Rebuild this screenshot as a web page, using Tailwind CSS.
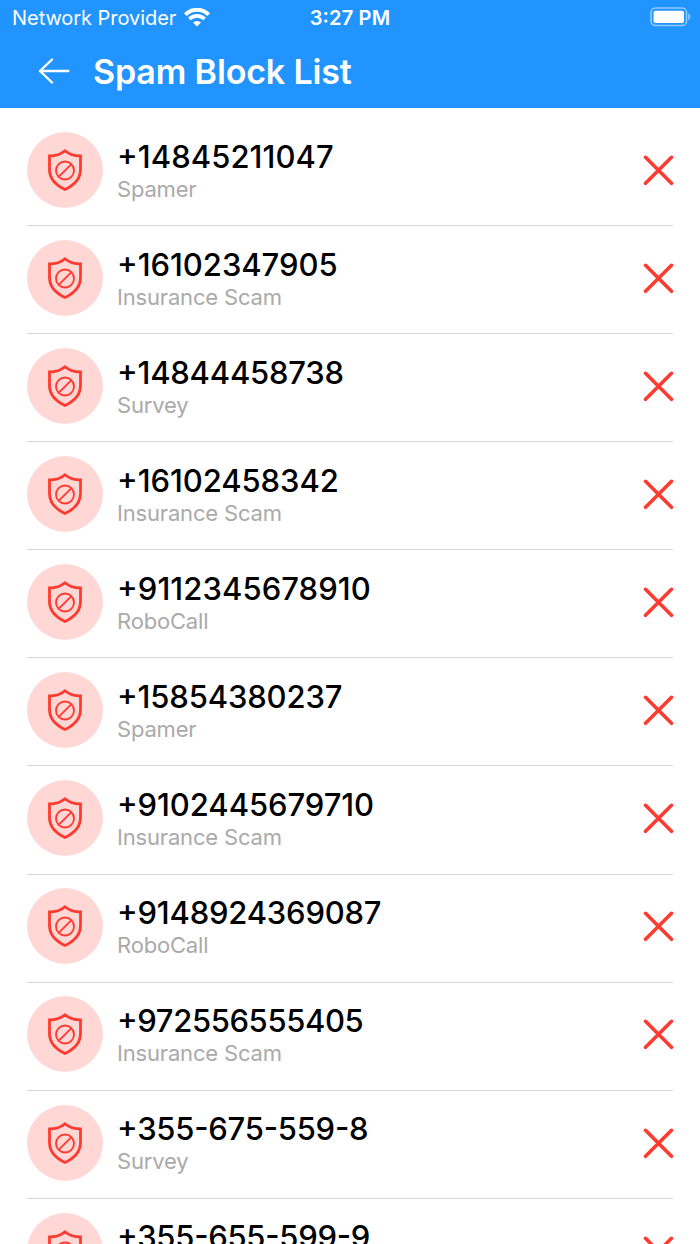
<!DOCTYPE html>
<html lang="en">
<head>
    <meta charset="UTF-8">
    <meta name="viewport" content="width=device-width, initial-scale=1.0">
    <title>Spam Block List</title>
    <script src="https://cdn.jsdelivr.net/npm/@tailwindcss/browser@4"></script>
</head>
<body class="bg-white font-['Inter',sans-serif] [font-feature-settings:'calt'_1] h-screen overflow-hidden">
<header class="bg-[#2194ff] text-white h-[108px]">
    <!-- Status bar -->
    <div class="grid grid-cols-3 items-center h-9 pl-3 pr-[9px]">
        <div class="flex items-center gap-2">
            <span class="text-[20px] tracking-[-0.05px] whitespace-nowrap">Network Provider</span>
            <svg class="w-[26px] h-[19px] shrink-0 -mt-0.5" viewBox="0 0 26 19" fill="none" stroke="currentColor">
                <path d="M1.3 6.6a16.6 16.6 0 0 1 23.4 0" stroke-width="3.9"/>
                <path d="M5.4 11a10.8 10.8 0 0 1 15.2 0" stroke-width="3.6"/>
                <path d="M13 18.5l-4-4a5.8 5.8 0 0 1 8 0z" fill="currentColor" stroke="none"/>
            </svg>
        </div>
        <span class="text-[20px] font-semibold text-center tracking-[0.15px] -ml-[3px]">3:27 PM</span>
        <svg class="w-[41px] h-[20px] justify-self-end -mt-0.5" viewBox="0 0 41 20" fill="none">
            <rect x="1" y="1" width="35.5" height="17.5" rx="4.5" stroke="#fff" stroke-opacity=".5" stroke-width="1.6"/>
            <rect x="3.5" y="3.7" width="30.5" height="12.3" rx="2" fill="#fff"/>
            <path d="M38.3 6.5c2.6 1 2.6 5.5 0 6.5z" fill="#fff" fill-opacity=".55"/>
        </svg>
    </div>
    <!-- Title bar -->
    <div class="flex items-center h-[70px] pl-[38px] gap-[23px]">
        <svg class="w-8 h-[26px]" viewBox="0 0 32 26" fill="none" stroke="currentColor" stroke-width="2.4" stroke-linecap="round" stroke-linejoin="round">
            <path d="M30.3 13H2M14 1.5L2 13l12 11.5"/>
        </svg>
        <h1 class="text-[34px] font-semibold tracking-[-0.15px]">Spam Block List</h1>
    </div>
</header>
<ul id="block-list" class="pt-[10px] px-[27px]">
    <!-- Rows are added here -->
</ul>
<script>
    // number, label, letter spacing in px
    const numbers = [
        ['+14845211047', 'Spamer', 0.08],
        ['+16102347905', 'Insurance Scam', -0.03],
        ['+14844458738', 'Survey', -0.2],
        ['+16102458342', 'Insurance Scam', -0.06],
        ['+9112345678910', 'RoboCall', 0.08],
        ['+15854380237', 'Spamer', -0.14],
        ['+9102445679710', 'Insurance Scam', -0.07],
        ['+9148924369087', 'RoboCall', -0.2],
        ['+972556555405', 'Insurance Scam', -0.38],
        ['+355-675-559-8', 'Survey', -0.24],
        ['+355-655-599-9', 'Spamer', -0.26],
    ];

    const list = document.getElementById('block-list');
    numbers.forEach(([number, label, spacing]) => {
        list.insertAdjacentHTML('beforeend', `
      <li class="flex items-start h-[108.08px] pt-[13.8px] border-b border-[#d9d9d9]">
        <div class="size-[76px] rounded-full bg-[#ffd8d6] flex items-center justify-center shrink-0">
          <svg class="w-9 h-11" viewBox="0 0 36 44" fill="none" stroke="#ff3b30">
            <path d="M18 2.8C14 6.2 8.5 8 2.5 8v13.5c0 9.5 6 15.5 15.5 20 9.5-4.5 15.5-10.5 15.5-20V8C27.5 8 22 6.2 18 2.8z" stroke-width="2.8"/>
            <circle cx="18" cy="22.5" r="9" stroke-width="1.9"/>
            <path d="M11.8 28.7l12.4-12.4" stroke-width="1.9"/>
          </svg>
        </div>
        <div class="ml-[14px] pt-[5.8px] grow">
          <div class="text-[31px] leading-[38px] font-medium text-black" style="letter-spacing: ${spacing}px">${number}</div>
          <div class="text-[22px] leading-[27px] tracking-[-0.18px] text-[#aaaaaa]">${label}</div>
        </div>
        <button class="mt-[23px] -mr-px" aria-label="Remove">
          <svg class="size-[31px]" viewBox="0 0 31 31" fill="none" stroke="#ff3b30" stroke-width="3.6" stroke-linecap="round">
            <path d="M2.5 2.3l26 26M28.5 2.3L2.5 28.3"/>
          </svg>
        </button>
      </li>
    `);
    });
</script>
</body>
</html>
